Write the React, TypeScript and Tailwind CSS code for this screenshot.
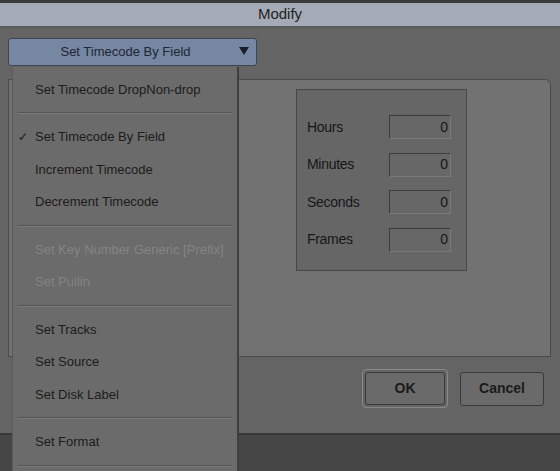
import React from "react";

const font = { fontFamily: '"Liberation Sans", Arial, sans-serif' };

function Sep() {
  return <div className="mx-[5px] my-[6.5px] h-[2px] border-t border-[#555555] border-b-[#7a7a7a] border-b" />;
}

function Item({ label, checked, disabled }: { label: string; checked?: boolean; disabled?: boolean }) {
  return (
    <div className={`relative h-[32.5px] flex items-center pl-[22px] text-[13px] ${disabled ? "text-[#848484]" : "text-[#1c1c1c]"}`}>
      {checked && <span className="absolute left-[5px] text-[12px] text-[#1c1c1c]">✓</span>}
      {label}
    </div>
  );
}

function Field({ label }: { label: string }) {
  return (
    <div className="flex items-center h-[24px] justify-between">
      <span className="text-[14px] text-[#161616] tracking-[-0.3px]">{label}</span>
      <div className="w-[62px] h-[24px] border border-[#3c3c3c] border-r-[#7a7a7a] border-b-[#7a7a7a] bg-[#676767] flex items-center justify-end pr-[2px] text-[14px] text-[#161616]">
        0
      </div>
    </div>
  );
}

export default function App() {
  return (
    <div className="relative w-[560px] h-[471px] overflow-hidden bg-[#646464] flex flex-col" style={font}>
      <div className="h-[3px] bg-[#3b3b3b]" />
      <div className="h-[25px] bg-[#a4abb6] border-b-2 border-[#5a5a5a] flex items-center justify-center text-[15px] text-[#222222]">
        Modify
      </div>
      <div className="flex-1 flex flex-col">
        <div className="mt-[10px] ml-[8px] w-[249px] h-[28px] rounded-[3px] bg-[#7587a2] border border-[#3e4654] flex items-center relative text-[13px] text-[#1f2533]">
          <span className="flex-1 text-center pr-[14px]">Set Timecode By Field</span>
          <svg className="absolute right-[7px] top-[8px]" width="10" height="8" viewBox="0 0 10 8">
            <path d="M0 0 L10 0 L5 8 Z" fill="#1a1e28" />
          </svg>
        </div>
        <div className="mt-[13px] ml-[8px] mr-[9px] h-[278px] rounded-tr-[6px] bg-[#727272] border border-[#4a4a4a] relative">
          <div className="absolute left-[287px] top-[9px] w-[171px] h-[182px] bg-[#666666] border border-[#474747] pl-[10px] pr-[15px] pt-[25px] flex flex-col gap-[13.5px]">
            <Field label="Hours" />
            <Field label="Minutes" />
            <Field label="Seconds" />
            <Field label="Frames" />
          </div>
        </div>
        <div className="flex justify-end items-center gap-[12px] mr-[16px] mt-[12px]">
          <div className="p-[2px] rounded-[4px] border border-[#8a8a8a]">
            <div className="w-[80px] h-[33px] rounded-[3px] bg-[#6a6a6a] border border-[#3a3a3a] flex items-center justify-center text-[14px] font-bold text-[#1a1a1a]">
              OK
            </div>
          </div>
          <div className="w-[84px] h-[34px] rounded-[3px] bg-[#6a6a6a] border border-[#3a3a3a] flex items-center justify-center text-[14px] font-bold text-[#1a1a1a]">
            Cancel
          </div>
        </div>
        <div className="mt-auto h-[38px] bg-[#464646] border-t-2 border-[#3a3a3a]" />
      </div>

      <div className="absolute left-[12px] top-[67px] w-[227px] h-[420px] bg-[#6b6b6b] border-r-2 border-[#3f3f3f] border-l border-l-[#5a5a5a] pt-[6px]">
        <Item label="Set Timecode DropNon-drop" />
        <Sep />
        <Item label="Set Timecode By Field" checked />
        <Item label="Increment Timecode" />
        <Item label="Decrement Timecode" />
        <Sep />
        <Item label="Set Key Number Generic [Prefix]" disabled />
        <Item label="Set Pullin" disabled />
        <Sep />
        <Item label="Set Tracks" />
        <Item label="Set Source" />
        <Item label="Set Disk Label" />
        <Sep />
        <Item label="Set Format" />
        <Sep />
      </div>
    </div>
  );
}
